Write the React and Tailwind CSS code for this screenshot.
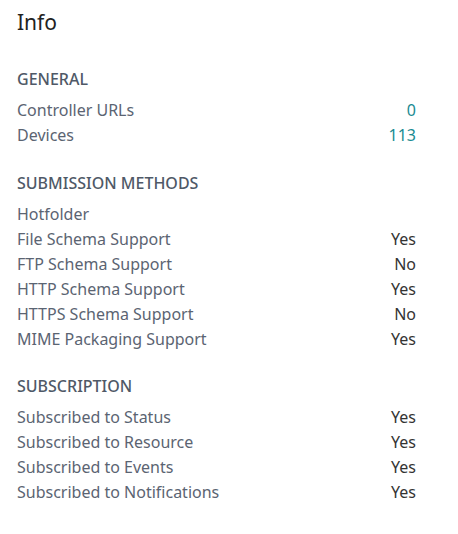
const sections = [
  {
    title: 'General',
    gap: 'mt-[33px]',
    rows: [
      { label: 'Controller URLs', value: '0', accent: true },
      { label: 'Devices', value: '113', accent: true },
    ],
  },
  {
    title: 'Submission Methods',
    gap: 'mt-[25px]',
    rows: [
      { label: 'Hotfolder', value: '' },
      { label: 'File Schema Support', value: 'Yes' },
      { label: 'FTP Schema Support', value: 'No' },
      { label: 'HTTP Schema Support', value: 'Yes' },
      { label: 'HTTPS Schema Support', value: 'No' },
      { label: 'MIME Packaging Support', value: 'Yes' },
    ],
  },
  {
    title: 'Subscription',
    gap: 'mt-[24px]',
    rows: [
      { label: 'Subscribed to Status', value: 'Yes' },
      { label: 'Subscribed to Resource', value: 'Yes' },
      { label: 'Subscribed to Events', value: 'Yes' },
      { label: 'Subscribed to Notifications', value: 'Yes' },
    ],
  },
]

function Section({ title, gap, rows }) {
  return (
    <section className={gap}>
      <h3 className="mb-[9px] text-[16px] font-medium uppercase leading-5 text-[#4f5967]">
        {title}
      </h3>
      <ul>
        {rows.map((row) => (
          <li key={row.label} className="flex items-center justify-between text-[16px] leading-[25px]">
            <span className="text-[#5b6472]">{row.label}</span>
            <span className={row.accent ? 'text-[#1a8b92]' : 'text-[#333333]'}>{row.value}</span>
          </li>
        ))}
      </ul>
    </section>
  )
}

export default function App() {
  return (
    <div
      className="min-h-[534px] w-[458px] bg-white pl-[17px] pr-[42px] pt-2"
      style={{ fontFamily: '"Noto Sans", "Open Sans", sans-serif' }}
    >
      <h2 className="text-[21px] leading-7 text-[#222222]">Info</h2>
      {sections.map((section) => (
        <Section key={section.title} {...section} />
      ))}
    </div>
  )
}
